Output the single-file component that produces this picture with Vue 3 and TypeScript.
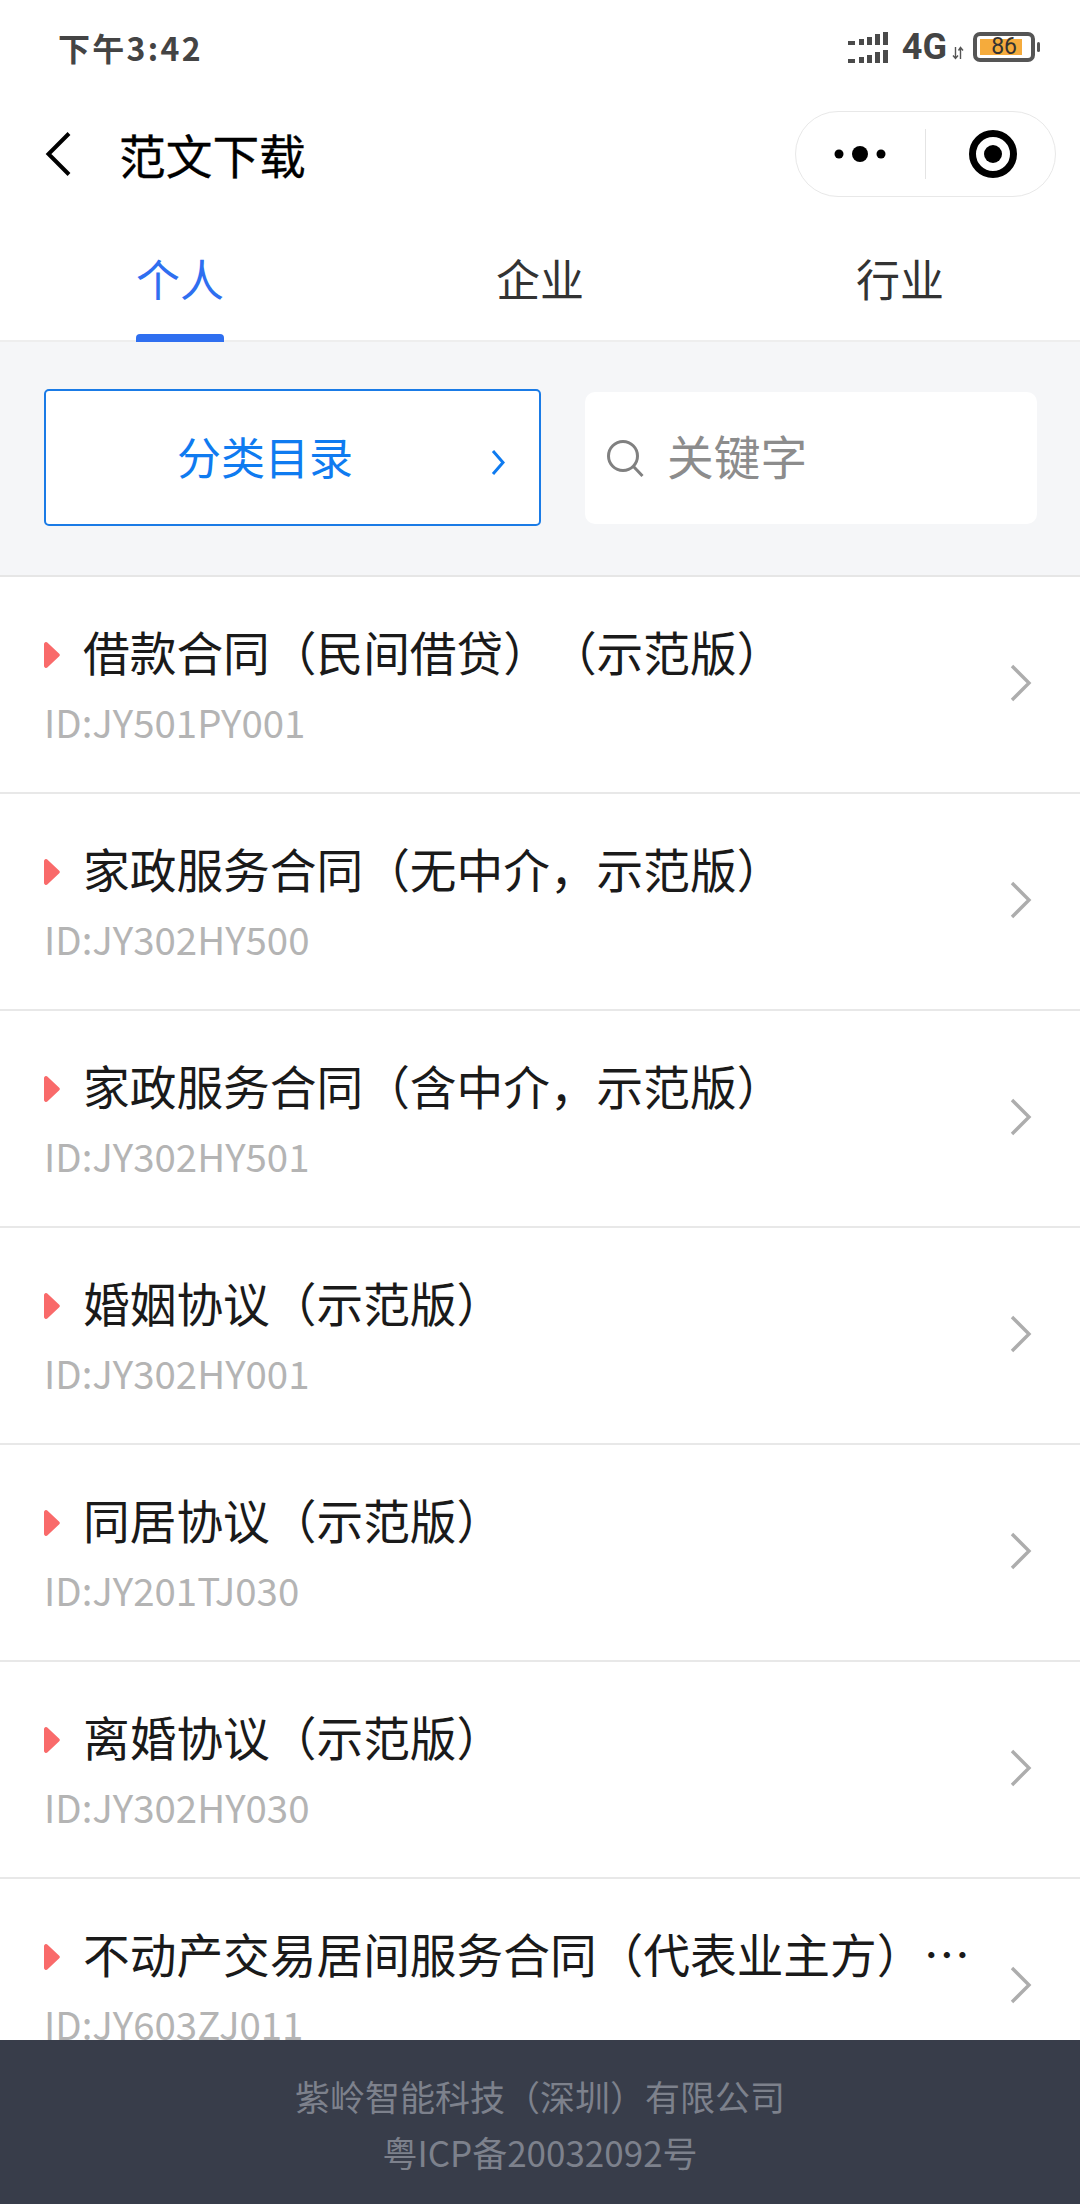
<script setup lang="ts">
import { ref } from "vue";

interface Doc {
  title: string;
  id: string;
}

const tabs = ["个人", "企业", "行业"];
const activeTab = ref(0);

const docs: Doc[] = [
  { title: "借款合同（民间借贷）（示范版）", id: "ID:JY501PY001" },
  { title: "家政服务合同（无中介，示范版）", id: "ID:JY302HY500" },
  { title: "家政服务合同（含中介，示范版）", id: "ID:JY302HY501" },
  { title: "婚姻协议（示范版）", id: "ID:JY302HY001" },
  { title: "同居协议（示范版）", id: "ID:JY201TJ030" },
  { title: "离婚协议（示范版）", id: "ID:JY302HY030" },
  { title: "不动产交易居间服务合同（代表业主方）（示范版）", id: "ID:JY603ZJ011" },
];

const signalBars = [
  { x: 0, w: 7, h: 4 },
  { x: 11, w: 5, h: 6 },
  { x: 19, w: 5, h: 8 },
  { x: 27, w: 5, h: 11 },
  { x: 35, w: 5, h: 13 },
];
</script>

<template>
  <div class="page">
    <div class="status-bar">
      <span class="time">下午3:42</span>
      <div class="status-right">
        <svg class="signal" width="40" height="31" viewBox="0 0 40 31">
          <g fill="#4a4a4a">
            <rect v-for="b in signalBars" :key="'t' + b.x" :x="b.x" :y="13 - b.h" :width="b.w" :height="b.h" />
            <rect v-for="b in signalBars" :key="'b' + b.x" :x="b.x" :y="31 - b.h" :width="b.w" :height="b.h" />
          </g>
        </svg>
        <span class="net">4G</span>
        <svg class="arrows" width="12" height="14" viewBox="0 0 12 14">
          <path d="M3.5 1v11M1 9.5l2.5 3 2.5-3M8.5 13V2M6.5 4.5l2-3 2.5 3" fill="none" stroke="#555" stroke-width="1.4" />
        </svg>
        <div class="battery">
          <div class="battery-fill">86</div>
        </div>
        <div class="battery-tip"></div>
      </div>
    </div>

    <div class="nav-bar">
      <svg class="back" width="30" height="46" viewBox="0 0 30 46">
        <path d="M25 2.5 4.5 23 25 43.5" fill="none" stroke="#000" stroke-width="4" />
      </svg>
      <h1 class="nav-title">范文下载</h1>
      <div class="capsule">
        <div class="capsule-cell">
          <svg width="62" height="20" viewBox="0 0 62 20">
            <circle cx="9" cy="10" r="4.5" fill="#000" />
            <circle cx="30" cy="10" r="8" fill="#000" />
            <circle cx="51" cy="10" r="4.5" fill="#000" />
          </svg>
        </div>
        <div class="capsule-line"></div>
        <div class="capsule-cell">
          <svg class="target" width="48" height="48" viewBox="0 0 48 48">
            <circle cx="24" cy="24" r="20.5" fill="none" stroke="#000" stroke-width="7" />
            <circle cx="24" cy="24" r="9" fill="#000" />
          </svg>
        </div>
      </div>
    </div>

    <div class="tabs">
      <div v-for="(tab, i) in tabs" :key="tab" class="tab" :class="{ active: i === activeTab }" @click="activeTab = i">
        {{ tab }}
      </div>
    </div>

    <div class="filter">
      <div class="category-btn">
        <span>分类目录</span>
        <svg class="category-arrow" width="17" height="27" viewBox="0 0 17 27">
          <path d="M3 2l10 11.5L3 25" fill="none" stroke="#0f7bf0" stroke-width="3" />
        </svg>
      </div>
      <div class="search">
        <svg width="40" height="40" viewBox="0 0 40 40">
          <circle cx="18" cy="18" r="14.5" fill="none" stroke="#808080" stroke-width="3" />
          <path d="M28.5 28.5l9 9.5" stroke="#808080" stroke-width="3" fill="none" />
        </svg>
        <span class="placeholder">关键字</span>
      </div>
    </div>

    <div class="list">
      <div v-for="doc in docs" :key="doc.id" class="row">
        <div class="row-body">
          <div class="row-title">
            <svg class="mark" width="16" height="26" viewBox="0 0 16 26">
              <path d="M0 2a2 2 0 0 1 3.3-1.5L15 11.5a2 2 0 0 1 0 3L3.3 25.5A2 2 0 0 1 0 24z" fill="#f96a6a" />
            </svg>
            <span class="row-text">{{ doc.title }}</span>
          </div>
          <div class="row-id">{{ doc.id }}</div>
        </div>
        <svg class="row-arrow" width="24" height="38" viewBox="0 0 24 38">
          <path d="M3 2l17 17L3 36" fill="none" stroke="#adadad" stroke-width="3.4" />
        </svg>
      </div>
    </div>

    <footer class="footer">
      <div>紫岭智能科技（深圳）有限公司</div>
      <div>粤ICP备20032092号</div>
    </footer>
  </div>
</template>

<style scoped>
.page {
  position: relative;
  width: 1080px;
  height: 2204px;
  overflow: hidden;
  background: #fff;
  font-family: "Noto Sans CJK SC", "Noto Sans", sans-serif;
}

.status-bar {
  height: 92px;
  display: flex;
  align-items: center;
  justify-content: space-between;
  padding: 2px 40px 0 58px;
  box-sizing: border-box;
  color: #444;
}

.time {
  font-size: 32px;
  font-weight: 700;
  letter-spacing: 2.3px;
}

.status-right {
  display: flex;
  align-items: center;
}

.net {
  margin-left: 14px;
  font-family: "Roboto", sans-serif;
  font-size: 36px;
  font-weight: 700;
}

.arrows {
  margin: 12px 9px 0 5px;
}

.battery {
  width: 62px;
  height: 30px;
  box-sizing: border-box;
  border: 4px solid #555;
  border-radius: 7px;
  padding: 3px;
}

.battery-fill {
  width: 42px;
  height: 16px;
  background: #f5ab3c;
  color: #333;
  font-family: "Roboto", sans-serif;
  font-size: 23px;
  line-height: 16px;
  text-align: right;
  padding-right: 5px;
  box-sizing: border-box;
  white-space: nowrap;
}

.battery-tip {
  width: 3px;
  height: 10px;
  margin-left: 2px;
  background: #555;
  border-radius: 2px;
}

.nav-bar {
  height: 124px;
  display: flex;
  align-items: center;
  padding: 0 24px 0 44px;
}

.back {
  margin-right: 45px;
}

.nav-title {
  margin: -2px 0 0;
  flex: 1;
  font-size: 46.7px;
  font-weight: 400;
  color: #000;
  -webkit-text-stroke: 0.3px #000;
}

.capsule {
  width: 261px;
  height: 86px;
  box-sizing: border-box;
  border: 1px solid #e8e8e8;
  border-radius: 43px;
  display: flex;
  align-items: center;
}

.capsule-cell {
  flex: 1;
  display: flex;
  justify-content: center;
  align-items: center;
}

.target {
  margin-left: 5px;
}

.capsule-line {
  width: 1px;
  height: 50px;
  background: #e4e4e4;
}

.tabs {
  display: grid;
  grid-template-columns: repeat(3, 1fr);
  grid-template-rows: 124px;
}

.tab {
  position: relative;
  text-align: center;
  font-size: 44px;
  padding-top: 4px;
  line-height: 116px;
  color: #333;
}

.tab.active {
  color: #2f6ff0;
}

.tab.active::after {
  content: "";
  position: absolute;
  left: 136px;
  bottom: -2px;
  width: 88px;
  height: 8px;
  border-radius: 4px 4px 0 0;
  background: #2f6ff0;
}

.filter {
  display: flex;
  align-items: center;
  gap: 44px;
  height: 237px;
  box-sizing: border-box;
  padding: 0 43px 2px 44px;
  background: #f5f6f8;
  border-top: 2px solid #eee;
  border-bottom: 2px solid #e6e6e6;
}

.category-btn {
  position: relative;
  width: 497px;
  height: 137px;
  box-sizing: border-box;
  border: 2px solid #1a7be6;
  border-radius: 5px;
  background: #fff;
  display: flex;
  align-items: center;
  color: #0f7bf0;
  font-size: 44px;
  padding: 0 0 4px 131px;
}

.category-arrow {
  position: absolute;
  right: 32px;
  top: 58px;
}

.search {
  flex: 1;
  height: 132px;
  background: #fff;
  border-radius: 10px;
  display: flex;
  align-items: center;
  padding-left: 20px;
  gap: 22px;
}

.placeholder {
  font-size: 46.7px;
  color: #8c8c8c;
  margin-top: -6px;
}

.row {
  height: 217px;
  box-sizing: border-box;
  border-bottom: 2px solid #e8e8e8;
  display: flex;
  align-items: center;
  padding: 0 44px;
}

.row-body {
  flex: 1;
  min-width: 0;
  align-self: flex-start;
  padding-top: 46px;
}

.row-title {
  display: flex;
  align-items: center;
  height: 64px;
}

.mark {
  flex: none;
  margin-right: 23px;
}

.row-text {
  flex: 1;
  min-width: 0;
  margin-top: -8px;
  font-size: 46.7px;
  line-height: 72px;
  color: #1a1a1a;
  white-space: nowrap;
  overflow: hidden;
  text-overflow: ellipsis;
  text-spacing-trim: space-all;
}

.row-id {
  margin-top: 6px;
  font-size: 38.4px;
  line-height: 56px;
  color: #b4b4b4;
}

.row-arrow {
  flex: none;
  margin-left: 20px;
  margin-top: -4px;
  margin-right: 3px;
}

.footer {
  position: absolute;
  left: 0;
  right: 0;
  bottom: 0;
  height: 164px;
  box-sizing: border-box;
  padding-top: 28px;
  background: #383d4a;
  color: #7d818c;
  font-size: 35px;
  line-height: 56px;
  text-align: center;
}
</style>
